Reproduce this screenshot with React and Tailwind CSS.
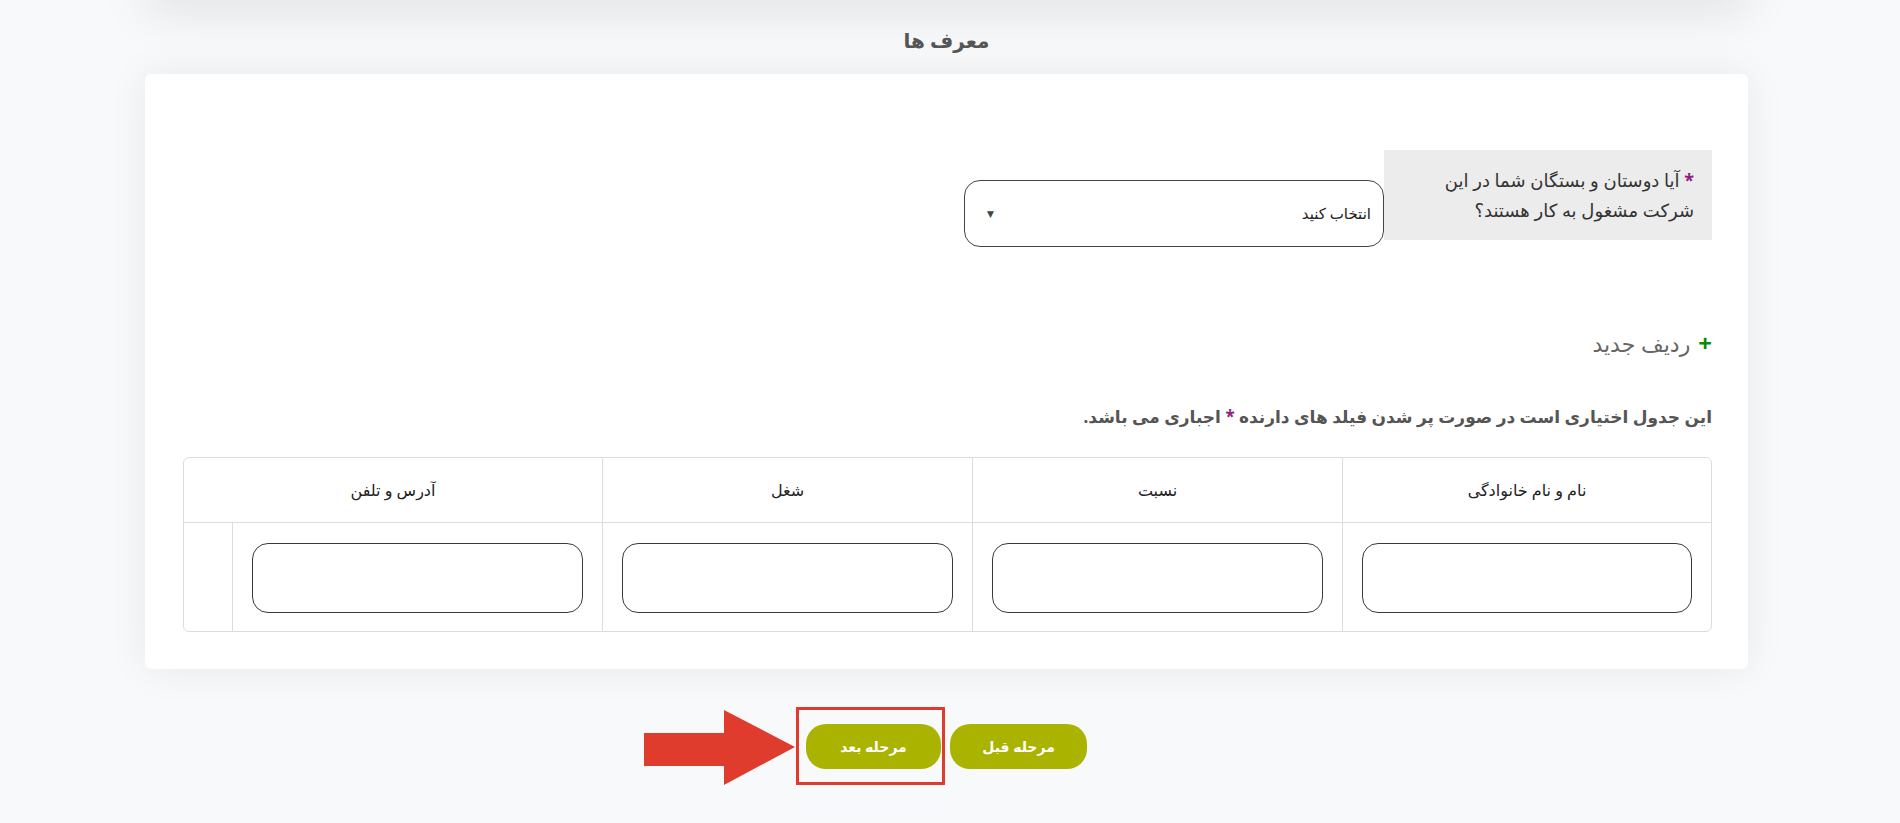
import React from "react";

function Field() {
  return (
    <div className="h-[108px] px-[19px] pt-[20px] border-l border-[#dcdcdc]">
      <div className="h-[70px] w-full rounded-[16px] border border-[#3a3a3a] bg-white"></div>
    </div>
  );
}

export default function App() {
  const font = { fontFamily: '"Noto Sans", "DejaVu Sans", sans-serif' };
  return (
    <div className="min-h-screen w-full bg-[#f8f9fb] overflow-hidden" style={font}>
      <div className="ml-[145px] w-[1603px] h-[30px] -mt-[30px] bg-white rounded-[6px] shadow-[0_6px_50px_rgba(0,0,0,0.14)]"></div>
      <div dir="rtl" className="ml-[145px] w-[1603px]">
        <div className="pt-[26px] mb-[18px] h-[56px] text-center text-[20px] leading-[30px] font-bold text-[#555]">
          معرف ها
        </div>
        <div className="bg-white rounded-[6px] shadow-[0_0_40px_rgba(0,0,0,0.07)] pt-[76px] pr-[36px] pl-[38px] pb-[37px]">
          <div className="flex items-start">
            <div className="w-[328px] h-[90px] bg-[#ececec] pt-[15px] pr-[18px] pl-[4px] text-[18px] leading-[30px] text-[#333] whitespace-nowrap">
              <span className="text-[#8e1f7f] font-bold">*</span> آیا دوستان و بستگان شما در این
              <br />
              شرکت مشغول به کار هستند؟
            </div>
            <div className="w-[420px] h-[67px] mt-[30px] rounded-[16px] border border-[#444] flex items-center justify-between pr-[12px] pl-[22px] text-[15px] text-[#222]">
              <span>انتخاب کنید</span>
              <span className="text-[9px] text-[#444]">▼</span>
            </div>
          </div>

          <div className="mt-[81px] flex items-center gap-2 text-[22px] leading-[30px] text-[#666]">
            <span className="text-[#0a8a0a] text-[24px] font-bold leading-[24px]">+</span>
            <span>ردیف جدید</span>
          </div>

          <div className="mt-[46px] text-[17px] leading-[26px] font-bold text-[#555]">
            این جدول اختیاری است در صورت پر شدن فیلد های دارنده <span className="text-[#8e1f7f]">*</span> اجباری می باشد.
          </div>

          <div className="mt-[27px] border border-[#dcdcdc] rounded-[6px] overflow-hidden">
            <div className="grid grid-cols-[369px_370px_370px_1fr] h-[65px] border-b border-[#dcdcdc] text-[16px] text-[#222]">
              <div className="flex items-center justify-center border-l border-[#dcdcdc]">نام و نام خانوادگی</div>
              <div className="flex items-center justify-center border-l border-[#dcdcdc]">نسبت</div>
              <div className="flex items-center justify-center border-l border-[#dcdcdc]">شغل</div>
              <div className="flex items-center justify-center">آدرس و تلفن</div>
            </div>
            <div className="grid grid-cols-[369px_370px_370px_370px_1fr]">
              <Field />
              <Field />
              <Field />
              <Field />
              <div></div>
            </div>
          </div>
        </div>

        <div className="mt-[55px] flex justify-center gap-[9px]">
          <button className="w-[137px] h-[45px] rounded-[20px] bg-[#aab300] text-white text-[14px] font-bold">
            مرحله قبل
          </button>
          <div className="relative">
            <button className="w-[135px] h-[45px] rounded-[20px] bg-[#aab300] text-white text-[14px] font-bold">
              مرحله بعد
            </button>
            <div className="absolute -top-[17px] -right-[4px] w-[149px] h-[78px] border-[3px] border-[#e03c2e] pointer-events-none"></div>
            <svg className="absolute -top-[14px] -left-[162px]" width="152" height="75" viewBox="0 0 152 75">
              <polygon points="0,23 80,23 80,0 151,37 80,75 80,56 0,56" fill="#e03c2e" />
            </svg>
          </div>
        </div>
      </div>
    </div>
  );
}
